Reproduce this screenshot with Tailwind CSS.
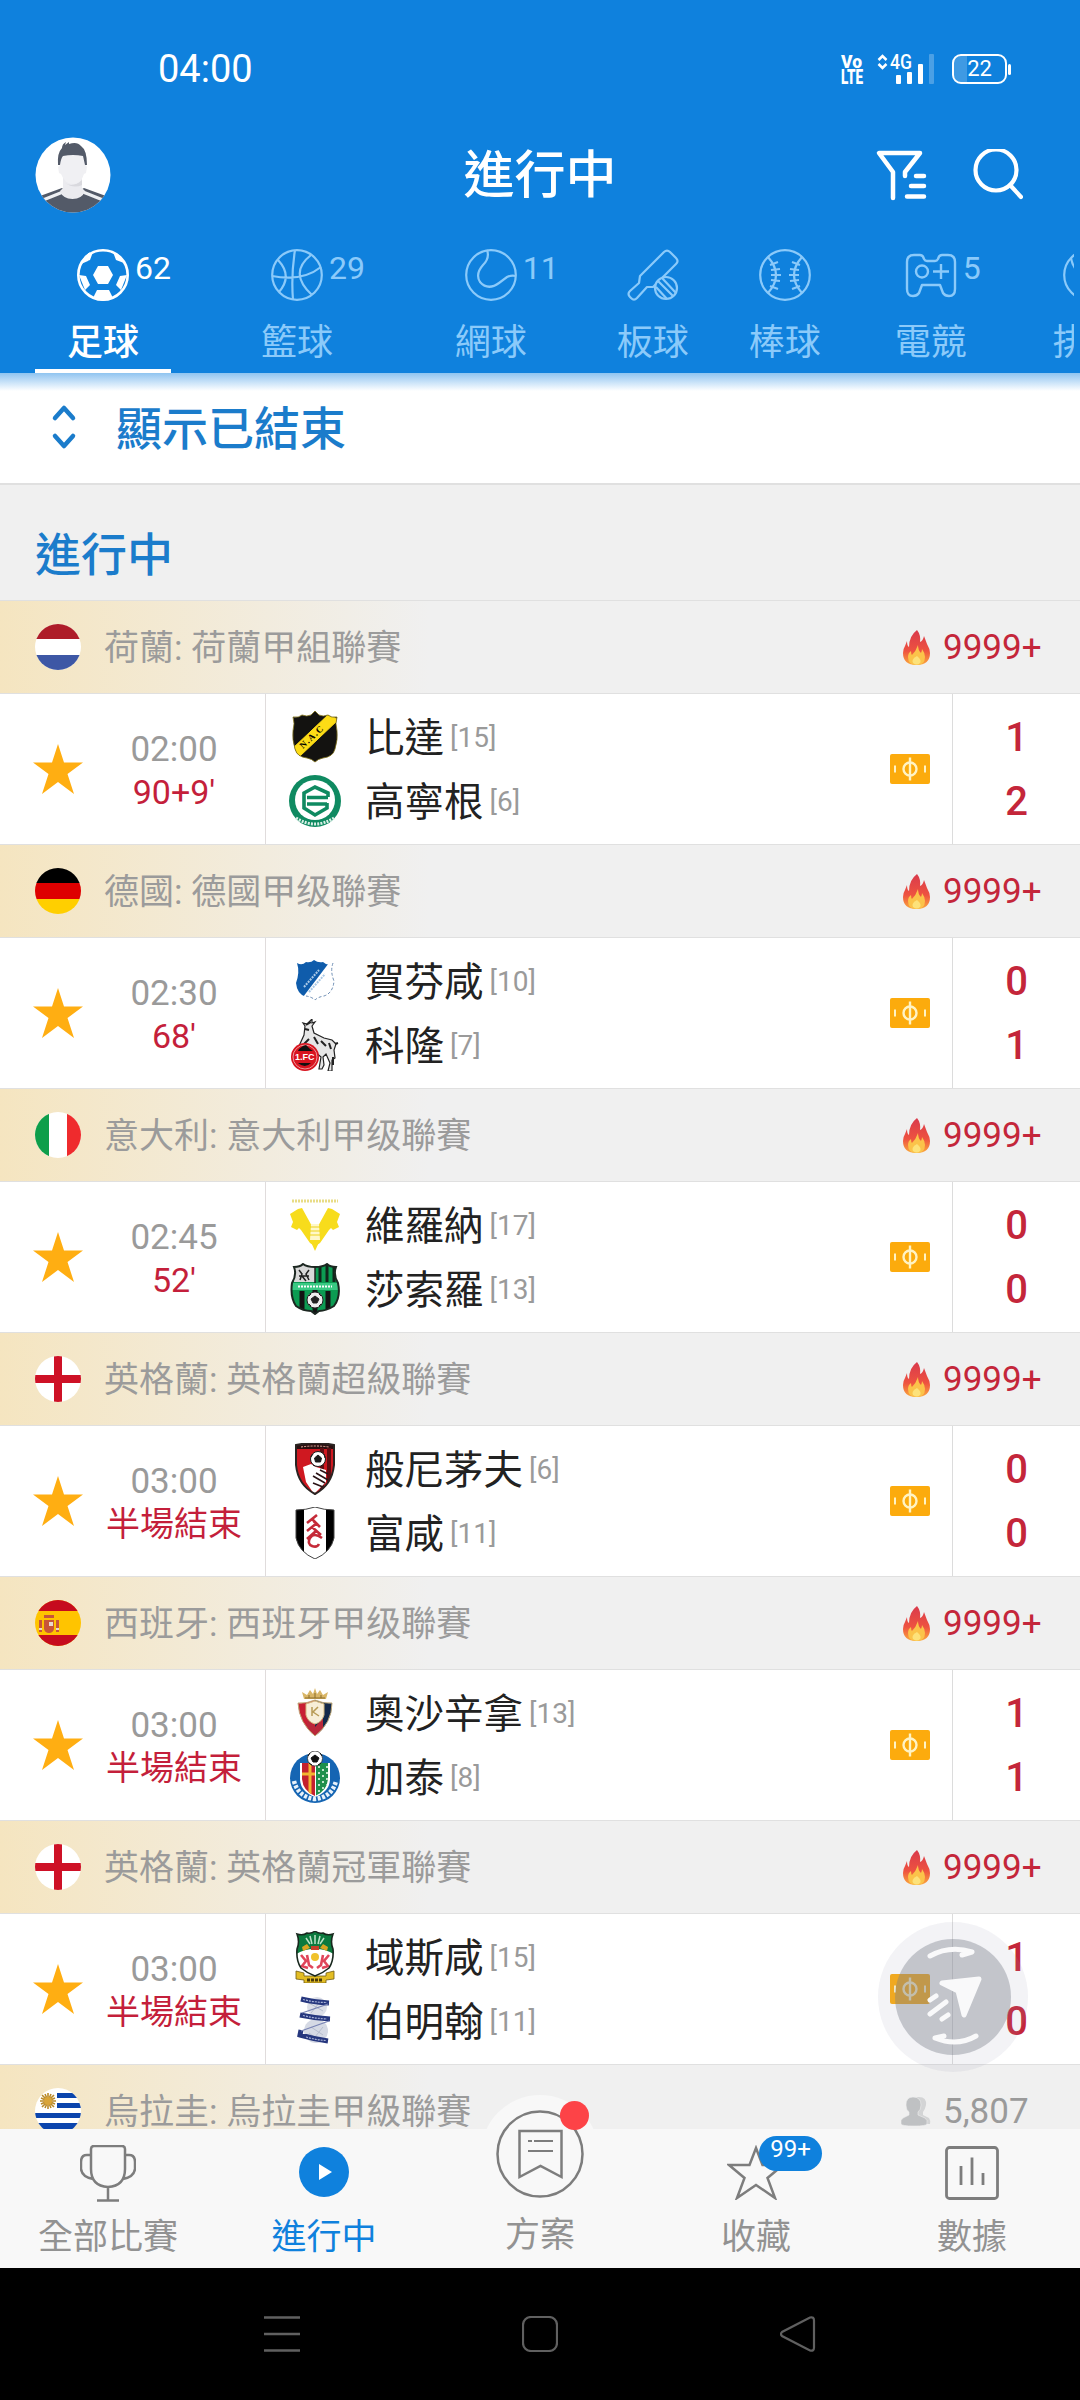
<!doctype html>
<html lang="zh-Hant">

<head>
  <meta charset="UTF-8">
  <meta content="width=device-width, initial-scale=1.0" name="viewport">
  <script src="https://cdn.jsdelivr.net/npm/@tailwindcss/browser@4"></script>
  <title>進行中</title>
</head>

<body class="bg-black">
  <!--  SPRITES  START -->
  <svg class="absolute size-0" xmlns="http://www.w3.org/2000/svg">
    <clipPath id="round"><circle cx="23" cy="23" r="23"/></clipPath>
    <clipPath id="nacShield"><path d="M4 6q6 1 9-2 5 2 9 0l4-4 4 4q4 2 9 0 3 3 9 2-2 6 0 14 1 8-2 18-2 8-12 9-5 1-8 4-3-3-8-4-10-1-12-9-3-10-2-18 2-8 0-14z"/></clipPath>
    <clipPath id="hofShield"><path d="M8 8q5 3 9-1 5 1 8-2 4 3 9 2 4 4 10 2-3 8 1 18-1 12-10 15-6 1-9 4-3-3-9-4-9-3-10-14 4-11 1-20z"/></clipPath>
    <clipPath id="sasShield"><path d="M5 4q6 0 9-3 4 3 12 3 8 0 12-3 3 3 9 3-3 8 2 16 3 14-4 23-8 5-15 5l-4 3-4-3q-8 0-15-5-6-9-4-23 5-8 2-16z"/></clipPath>
    <clipPath id="bouShield"><path d="M7 2q19-4 38 0v20q-2 20-19 29-17-9-19-29z"/></clipPath>
    <clipPath id="fulShield"><path d="M7 3q10 0 19-3 9 3 19 3v28q-3 14-19 21-16-7-19-21z"/></clipPath>
    <clipPath id="osaShield"><path d="M9 16q8 1 17-3 9 4 17 3 0 20-17 33-16-13-17-33z"/></clipPath>
    <clipPath id="getInner"><path d="M13 12h26v16q-1 12-13 17-12-5-13-17z"/></clipPath>
    <clipPath id="wreShield"><path d="M8 3q6 2 10-1 5 1 8-2 3 3 8 2 4 3 10 1-3 8 0 15 1 12-4 19-6 5-14 8-8-3-14-8-5-7-4-19 3-7 0-15z"/></clipPath>
    <linearGradient id="flameFill" x1="0" x2="0" y1="0" y2="1">
      <stop offset="0" stop-color="#d93a4c"/><stop offset=".6" stop-color="#ee5240"/><stop offset="1" stop-color="#fba93c"/>
    </linearGradient>

    <!-- flags -->
    <symbol id="nl" viewBox="0 0 46 46"><g clip-path="url(#round)"><path fill="#fff" d="M0 0h46v46H0z"/><path fill="#ae1c28" d="M0 0h46v15H0z"/><path fill="#3d57a5" d="M0 31h46v15H0z"/></g></symbol>
    <symbol id="de" viewBox="0 0 46 46"><g clip-path="url(#round)"><path d="M0 0h46v15H0z"/><path fill="#de0000" d="M0 15h46v16H0z"/><path fill="#ffcf00" d="M0 31h46v15H0z"/></g></symbol>
    <symbol id="it" viewBox="0 0 46 46"><g clip-path="url(#round)"><path fill="#fff" d="M0 0h46v46H0z"/><path fill="#0e9e4a" d="M0 0h14v46H0z"/><path fill="#ef2b2d" d="M32 0h14v46H32z"/></g></symbol>
    <symbol id="en" viewBox="0 0 46 46"><g clip-path="url(#round)"><path fill="#fff" d="M0 0h46v46H0z"/><path fill="#ce1126" d="M19 0h8v46h-8zM0 19h46v8H0z"/></g></symbol>
    <symbol id="es" viewBox="0 0 46 46"><g clip-path="url(#round)"><path fill="#ffc400" d="M0 0h46v46H0z"/><path fill="#c60b1e" d="M0 0h46v11H0zM0 35h46v11H0z"/><path fill="#c8553a" d="M9 20h10v9q-1 4-5 4t-5-4zM4 20h3v12H4zM21 20h3v12h-3zM9 15h10v3H9z"/><path fill="#e9d9cf" d="M14 22h4v4h-4zM4 28h3v2H4zM21 28h3v2h-3z"/></g></symbol>
    <symbol id="uy" viewBox="0 0 46 46"><g clip-path="url(#round)"><path fill="#fff" d="M0 0h46v46H0z"/><path fill="#0b45ad" d="M22 5h24v5H22zM22 15h24v5H22zM0 25h46v5H0zM0 35h46v6H0z"/><path stroke="#b98a2a" stroke-width="1.6" d="M13 5v16M5 13h16M7 7l12 12M19 7L7 19M10 6l6 14M16 6l-6 14M6 10l14 6M6 16l14-6"/><circle cx="13" cy="13" r="4" fill="#d9a53a"/></g></symbol>

    <!-- club logos -->
    <symbol id="nac" viewBox="0 0 52 52"><g clip-path="url(#nacShield)"><path fill="#131210" d="M0 0h52v52H0z"/><path fill="#fddc16" stroke="#fddc16" d="M3 38L40 3l9 6L11 45z"/></g><path d="M4 6q6 1 9-2 5 2 9 0l4-4 4 4q4 2 9 0 3 3 9 2-2 6 0 14 1 8-2 18-2 8-12 9-5 1-8 4-3-3-8-4-10-1-12-9-3-10-2-18 2-8 0-14z" fill="none" stroke="#7c6d14" stroke-width=".8"/><text transform="translate(14 38) rotate(-43)" font-family="Liberation Serif" font-weight="700" font-size="9" letter-spacing="1.1">N.A.C</text></symbol>
    <symbol id="gro" viewBox="0 0 52 52"><circle cx="26" cy="26" r="26" fill="#0f8a61"/><circle cx="26" cy="25" r="20" fill="#fff"/><path d="M7 43q19 12 38 0" fill="none" stroke="#d9efe6" stroke-width="3" stroke-dasharray="2 1.2"/><path fill="none" stroke="#0f8a61" stroke-width="3.6" d="M39 22v-4l-13-6-11 6v15l11 7 12-7v-5M18 22.500h21M18 29h20"/></symbol>
    <symbol id="hof" viewBox="0 0 52 52"><g clip-path="url(#hofShield)"><path fill="#fff" d="M0 0h52v52H0z"/><path fill="#0f5cab" d="M0 0h46L11 46H0z"/><path stroke="#a9c8e6" stroke-width="2" stroke-dasharray="2 1" d="M15 32l15-17M20 37l16-18"/></g><path d="M44 8q-3 8 1 18-1 12-10 15-6 1-9 4-3-3-9-4" fill="none" stroke="#6f8fb5" stroke-dasharray="3 2"/></symbol>
    <symbol id="koe" viewBox="0 0 52 52"><path d="M15 16l1-9-2-3 4 1 5-5v4l3-1-3 4 2 7 10 5 8 2 4 4-2 6 1 8-3 2v11h-4l2-8-4-9-3 3 1 8-2 4h-3l2-12-7-6-12 2-3-7z" fill="#e6e6e6" stroke="#222" stroke-width="1.2"/><path d="M17 6l5-3M16 10l4 1M20 20l-5 5M25 18l4 7M32 22l5 5M40 24l2 6M44 38v8M46 25l3-1" stroke="#222" stroke-width="2"/><circle cx="16" cy="38" r="14" fill="#d8141f"/><circle cx="16" cy="38" r="12" fill="none" stroke="#f3b6b6" stroke-width=".8"/><path d="M10 30l4-3 3-1 4 4 3 2H9zM9 44q7 6 13 0z" fill="#111"/><text x="6" y="41" font-family="Liberation Sans" font-weight="700" font-size="9" fill="#fff">1.FC</text></symbol>
    <symbol id="ver" viewBox="0 0 52 52"><path stroke="#e8dc86" stroke-width="3" stroke-dasharray="2 1" d="M3 2h46"/><path fill="#f7dc1c" d="M1 15l8-5 4-1 11 20v17l-3-2L12 31l-2-2-2 2-6-3 2-5zM51 15l-8-5-4-1-11 20v17l3-2 9-13 2-2 2 2 6-3-2-5z"/><path fill="#fff8c8" d="M22 25h8l1 16h-10z"/><path stroke="#ecd21c" d="M21 28h10M21 32h10M21 36h10"/><path fill="#f7dc1c" d="M21 41h10l-5 11z"/></symbol>
    <symbol id="sas" viewBox="0 0 52 52"><g clip-path="url(#sasShield)"><path fill="#0c9b52" d="M0 0h52v52H0z"/><path fill="#d9d9d9" d="M5 0h21v19H5z"/><path stroke="#222" stroke-width="1.5" fill="none" d="M10 7l3 4-2 6M20 7l-3 4 3 6M13 13l4 5M10 13h10"/><path stroke="#10261b" stroke-width="3" d="M31 2v17M38 2v17M45 2v17"/><path stroke="#131313" stroke-width="5" d="M13 28v20M39 28v20M26 27v23"/><path fill="#39c983" d="M2 20h48v7H2z"/></g><path d="M5 4q6 0 9-3 4 3 12 3 8 0 12-3 3 3 9 3-3 8 2 16 3 14-4 23-8 5-15 5l-4 3-4-3q-8 0-15-5-6-9-4-23 5-8 2-16z" fill="none" stroke="#1c2721" stroke-width="2"/><path d="M26 4v16" stroke="#222" stroke-width="1.5"/><path stroke="#fff" stroke-width="2" stroke-dasharray="2 1" d="M9 23.500h34"/><circle cx="26" cy="37" r="8" fill="#eee" stroke="#222"/><path d="M26 33l4 3-2 4h-4l-2-4zM20 33l2-2M30 31l2 2M20 41l2 2M30 43l2-2" fill="#222" stroke="#222"/></symbol>
    <symbol id="bou" viewBox="0 0 52 52"><g clip-path="url(#bouShield)"><path fill="#cf1820" d="M0 0h52v52H0z"/><path fill="#2a0f10" d="M7 0h38v6H7z"/><path stroke="#5e0d12" stroke-width="4" d="M33 5v45M40 5v45"/><path fill="#fff" d="M14 24l8-3 5 3 10 3v12L25 51l-8-12z"/><path stroke="#2b1416" stroke-width="1.6" d="M24 33l12 7M27 30l12 7M31 27l8 4M24 40l10 4"/></g><path d="M7 2q19-4 38 0v20q-2 20-19 29-17-9-19-29z" fill="none" stroke="#2a2422" stroke-width="2"/><path stroke="#e8b0a0" stroke-dasharray="2 1.200" d="M12 4q14-2 28 0" fill="none"/><circle cx="29" cy="16" r="7.500" fill="#fff" stroke="#1b1b1b"/><path d="M29 12l3.500 3-1 4h-5l-1-4zM22 14l2-3M35 11l1 4M24 22l2 1" stroke="#1b1b1b" fill="#1b1b1b"/></symbol>
    <symbol id="ful" viewBox="0 0 52 52"><g clip-path="url(#fulShield)"><path fill="#fff" d="M0 0h52v52H0z"/><path d="M0 0h15v52H0zM37 0h15v52H37z"/></g><path d="M7 3q10 0 19-3 9 3 19 3v28q-3 14-19 21-16-7-19-21z" fill="none" stroke="#444"/><path d="M18 16l10-8M23 12l8 8M18 24l10-8M23 20l9 8M24 15l2-1M18 32l9-8M33 31q-8-6-12 0-3 6 2 8 5 2 7-2" fill="none" stroke="#c52a38" stroke-width="2.600"/></symbol>
    <symbol id="osa" viewBox="0 0 52 52"><path fill="#d9b667" d="M15 12L13 5l5 3 3-5 3 4 2-6 2 6 3-4 3 5 5-3-2 7z"/><path d="M16 11h20M20 8v3M26 6v5M32 8v3" stroke="#8b6d2b"/><g clip-path="url(#osaShield)"><path fill="#c81f33" d="M0 0h26v52H0z"/><path fill="#13294b" d="M26 0h26v52H26z"/><path fill="#b9283a" d="M26 40l-8-9v21h16V31z"/></g><path d="M9 16q8 1 17-3 9 4 17 3 0 20-17 33-16-13-17-33z" fill="none" stroke="#bfa878"/><path fill="#f7eed8" stroke="#d5b980" d="M17 17l9-3 9 3v11q-2 7-9 9-7-2-9-9z"/><path d="M23 20v9M29 20l-5 5 6 4" stroke="#b79a55" fill="none" stroke-width="1.500"/></symbol>
    <symbol id="get" viewBox="0 0 52 52"><circle cx="26" cy="27" r="25" fill="#1565b3"/><path d="M5 30q4 16 21 18 17-2 21-18" fill="none" stroke="#e8f1fa" stroke-width="4.500" stroke-dasharray="3 1.600"/><path fill="#fff" d="M11 12h30v17q-1 12-15 17-14-5-15-17z"/><g clip-path="url(#getInner)"><path fill="#c4202f" d="M13 10h13v40H13z"/><path fill="#1d8f4c" d="M27 10h13v40H27z"/><path stroke="#f2b530" stroke-width="3" d="M21 10v36M12 23h14"/><path stroke="#bfe3cb" stroke-width="2" stroke-dasharray="2 4" d="M30 15v30M34 18v30M38 15v30"/></g><circle cx="26" cy="7.500" r="7.500" fill="#fff" stroke="#333" stroke-width=".8"/><path d="M26 4l4 3-2 4h-4l-2-4zM19 5l2-3M31 2l2 3M20 12l3 2M29 14l3-2" fill="#111" stroke="#111"/></symbol>
    <symbol id="wre" viewBox="0 0 52 52"><path fill="#e3bd24" stroke="#6e5a12" stroke-width=".8" d="M7 40l8 2v3h22v-3l8-2v8l-8 1v3H15v-3l-8-1z"/><path d="M18 49h16" stroke="#4a3b0a" stroke-width="3" stroke-dasharray="3 1"/><g clip-path="url(#wreShield)"><path fill="#fff" d="M0 0h52v52H0z"/><path fill="#0c7a3e" d="M6 0h40v24q-8-6-20-6T6 24z"/><path stroke="#bde3c8" stroke-width="1.500" d="M26 4v9M21 5l2 8M31 5l-2 8M17 7l4 6M35 7l-4 6"/><path fill="#d9a520" d="M13 16l5-3 3 4-7 3zM39 16l-5-3-3 4 7 3z"/><path fill="#c8402a" d="M22 15h8v4h-8z"/><path stroke="#e0455a" stroke-width="2.600" fill="none" d="M12 24l5 6-4 5 6 2M18 24l2 10 4 3M40 24l-5 6 4 5-6 2M34 24l-2 10-4 3"/><circle cx="26" cy="26" r="4" fill="#f0c22c"/></g><path d="M8 3q6 2 10-1 5 1 8-2 3 3 8 2 4 3 10 1-3 8 0 15 1 12-4 19-6 5-14 8-8-3-14-8-5-7-4-19 3-7 0-15z" fill="none" stroke="#18271d" stroke-width="1.600"/></symbol>
    <symbol id="bir" viewBox="0 0 52 52"><circle cx="28" cy="12" r="10" fill="#dcdfe8"/><circle cx="27" cy="36" r="12" fill="#d5d9e4"/><path fill="none" stroke="#b5bccd" d="M20 8l14 8M22 32l12 8M20 38l8 6M30 8l-8 10M34 32l-8 10"/><path fill="none" stroke="#26377e" stroke-width="5" d="M12 4q12 3 28 4M11 20q14 3 30 4M12 35l-1 5q14 4 28 6"/><path fill="none" stroke="#7883b4" stroke-width="1.200" d="M39 9L13 18M40 26L12 36"/><path fill="none" stroke="#a9b3d8" stroke-width="1.200" stroke-dasharray="2 1" d="M14 4.500q12 3 24 3M14 20.500q12 3 24 3.500M17 42q10 3 20 3.500"/></symbol>

    <!-- small icons -->
    <symbol id="flame" viewBox="0 0 27 35"><path fill="url(#flameFill)" d="M14 0q4 5 3 12 3-1 4-6l3 8q3 5 3 9 0 12-13.500 12T0 23q0-4 2-7l2-5q0 5 2 6 0-11 8-17z"/><path fill="#fbc34a" d="M15 15q0 5 3 8 1-2 1-4 3 4 3 8 0 8-8.500 8T5 27q0-4 3-6 0 3 1 4 4-4 6-10z"/><path fill="#fde27a" d="M14 26q5 4 3 7-3 3-7 0-2-4 4-7z"/></symbol>
    <symbol id="people" viewBox="0 0 30 30"><path fill="#d3d4d5" d="M16 1q10-1 9 8-1 5-3 7v3l6 3q2 3 1 6H14z"/><path fill="#bfc1c3" stroke="#efefef" stroke-width=".6" d="M12 1q8 0 8 8 0 5-3 7v3l7 3q3 2 2 6-1 2-13 2T0 28q-1-4 2-6l6-3v-3q-3-2-3-7 0-8 7-8z"/></symbol>
    <symbol id="star" viewBox="0 0 50 50"><path fill="#ffae12" d="M25 0l6 18.500h19L34.500 30l6.500 20-16-12-16 12 6.500-20L0 18.500h19z"/></symbol>
    <symbol id="pitch" viewBox="0 0 40 30"><rect width="40" height="30" rx="2" fill="#fcab0d"/><g fill="none" stroke="#fff3c4"><circle cx="20" cy="15" r="6.500" stroke-width="2.400"/><path stroke-width="2.400" d="M20 3.500v23"/><path stroke-width="2" d="M5 11.500v7M35 11.500v7"/></g></symbol>
  </svg>
  <!--  SPRITES  END -->

  <div class="relative flex h-[2400px] w-[1080px] flex-col overflow-hidden bg-black font-['Roboto','Noto_Sans_CJK_TC',sans-serif]">

    <header class="h-[373px] shrink-0 bg-[#0f81dd] text-white">
      <!-- status bar -->
      <div class="flex h-[135px] items-center justify-between pt-[3px] pr-[69px] pl-[158px]">
        <span class="text-[38px] leading-none">04:00</span>
        <div class="flex h-[30px] items-center">
          <svg class="h-[30px] w-[22px] overflow-visible" viewBox="0 0 22 30" fill="#fff" font-family="Roboto" font-weight="900">
            <text x="0" y="14" font-size="18" textLength="21" lengthAdjust="spacingAndGlyphs">Vo</text>
            <text x="0" y="30" font-size="20" textLength="22" lengthAdjust="spacingAndGlyphs">LTE</text>
          </svg>
          <svg class="ml-[15px] h-[30px] w-[58px] overflow-visible" viewBox="0 0 58 30" fill="#fff" font-family="Roboto">
            <path fill="none" stroke="#fff" stroke-width="2.500" d="M.5 6l4-4 4 4M.5 10l4 4 4-4"/>
            <text x="12" y="15" font-size="21" font-weight="500" textLength="22" lengthAdjust="spacingAndGlyphs">4G</text>
            <rect x="18" y="21" width="5" height="9" rx="1"/><rect x="29" y="18" width="5" height="12" rx="1"/><rect x="40" y="10" width="5" height="20" rx="1"/>
            <rect x="51" y="0" width="5" height="30" rx="1" opacity=".25"/>
          </svg>
          <div class="relative ml-[16px] flex h-[30px] w-[55px] items-center justify-center rounded-[9px] border-[2.5px] border-white text-[22px] leading-none">
            <i class="absolute top-0 left-0 h-full w-[13px] rounded-l-[6px] bg-white/20"></i>
            22
          </div>
          <i class="ml-[1px] h-[11px] w-[3px] rounded-sm bg-white"></i>
        </div>
      </div>

      <!-- title bar -->
      <div class="grid h-[76px] grid-cols-3 items-center px-[35px]">
        <svg class="size-[76px]" viewBox="0 0 76 76">
          <clipPath id="face"><circle cx="38" cy="38" r="37.500"/></clipPath>
          <g clip-path="url(#face)">
            <path fill="#fff" d="M0 0h76v76H0z"/>
            <path fill="#535a68" d="M5 59l22-8 11 6 11-6 22 8v18H5z"/>
            <path stroke="#eef0f3" stroke-width="3" d="M8 63l20-8M68 63l-20-8"/>
            <path fill="#ebebef" d="M28 40h19v11l3 3q-3 8-12.500 8T25 54l3-3z"/>
            <path fill="#d9d9de" d="M30 46q8 5 17-3v5q-8 4-17-2z"/>
            <path fill="#f0f0f3" d="M25 16h26v12l1 2-1 6-2 1q-3 10-11 10t-12-10l-2-1-1-6 2-2z"/>
            <path fill="#535a68" d="M23 28q-1-12 4-17 0-4 4-6l-1 3 4-3v2q8-3 12 2 6 4 6 19l-2 0-2-9q-10-2-20 0-2 2-3 9z"/>
          </g>
        </svg>
        <h1 class="pt-[3px] text-center text-[51px] leading-[76px] font-medium">進行中</h1>
        <div class="flex items-center justify-end gap-[41px] pr-[22px]">
          <svg class="h-[52px] w-[56px]" viewBox="0 0 56 52" fill="none" stroke="#fff" stroke-width="4.500" stroke-linecap="round" stroke-linejoin="round">
            <path d="M19 49V23L5 4h41L31 23v4M42 27h8M37 37h13M33 47.500h17"/>
          </svg>
          <svg class="size-[52px]" viewBox="0 0 52 52" fill="none" stroke="#fff" stroke-width="4.200" stroke-linecap="round">
            <circle cx="25" cy="21" r="20.500"/><path d="M39 36l11 12"/>
          </svg>
        </div>
      </div>

      <!-- sport tabs -->
      <nav class="mr-[6px] flex h-[164px] items-start gap-[58px] overflow-hidden pt-[38px] pl-[35px] text-[#8bcafa]">
        <div class="flex h-[126px] shrink-0 flex-col items-center border-b-[6px] border-white text-white">
          <div class="grid grid-cols-[1fr_52px_1fr]">
            <i></i>
            <svg class="size-[52px]" viewBox="0 0 52 52" fill="#fff">
              <circle cx="26" cy="26" r="24.700" fill="none" stroke="#fff" stroke-width="2.600"/>
              <path d="M21 17h10l5 9-5 9H21l-5-9zM16 3l-3 8-8 3 6-9zM36 3l3 8 8 3-6-9zM13 3l-2 9-7 3 4-8zM2 26l7 1 4 9-5 5zM50 26l-7 1-4 9 5 5zM20 41h12l4 8-10 3-10-3z"/>
            </svg>
            <span class="pt-[1px] pl-1.5 text-[32px] leading-9">62</span>
          </div>
          <span class="mt-[22px] text-[36px] leading-10 font-medium">足球</span>
        </div>
        <div class="flex shrink-0 flex-col items-center">
          <div class="grid grid-cols-[1fr_52px_1fr]">
            <i></i>
            <svg class="size-[52px]" viewBox="0 0 52 52" fill="none" stroke="currentColor" stroke-width="2.200">
              <circle cx="26" cy="26" r="24.800"/>
              <path d="M24 1q-4 25-2 50M1 27q30 6 49-9M7 11q15 16 1 32M40 6Q17 24 41 46"/>
            </svg>
            <span class="pt-[1px] pl-1.5 text-[32px] leading-9">29</span>
          </div>
          <span class="mt-[22px] text-[36px] leading-10">籃球</span>
        </div>
        <div class="flex shrink-0 flex-col items-center">
          <div class="grid grid-cols-[1fr_52px_1fr]">
            <i></i>
            <svg class="size-[52px]" viewBox="0 0 52 52" fill="none" stroke="currentColor" stroke-width="2.200">
              <circle cx="26" cy="26" r="24.800"/>
              <path d="M22 1q3 8-4 15-8 9-3 17 8 9 19 1l8-6q4-2 9-1"/>
            </svg>
            <span class="pt-[1px] pl-1.5 text-[32px] leading-9">11</span>
          </div>
          <span class="mt-[22px] text-[36px] leading-10">網球</span>
        </div>
        <div class="flex shrink-0 flex-col items-center">
          <svg class="size-[52px]" viewBox="0 0 52 52" fill="none" stroke="currentColor" stroke-width="2.200" stroke-linejoin="round">
            <path d="M37 3q3-3 6 0l6 6q3 3 0 6L26 38l-6 0-10 11q-3 3-6 0l-1-1q-3-3 0-6l9-8 1-7z"/>
            <circle cx="39" cy="39" r="11" fill="#0f81dd"/><path d="M31 32l15 15M35 29l14 15M29 38l11 12"/>
          </svg>
          <span class="mt-[22px] text-[36px] leading-10">板球</span>
        </div>
        <div class="ml-[2px] flex shrink-0 flex-col items-center">
          <svg class="size-[52px]" viewBox="0 0 52 52" fill="none" stroke="currentColor" stroke-width="2.200">
            <circle cx="26" cy="26" r="24.800"/>
            <path d="M9 8q16 18 0 36M43 8q-16 18 0 36M11 16l8-3M12 21l9-1M12 26h10M12 31l9 1M11 37l8 3M41 16l-8-3M40 21l-9-1M40 26H30M40 31l-9 1M41 37l-8 3"/>
          </svg>
          <span class="mt-[22px] text-[36px] leading-10">棒球</span>
        </div>
        <div class="ml-[2px] flex shrink-0 flex-col items-center">
          <div class="grid grid-cols-[1fr_52px_1fr]">
            <i></i>
            <svg class="size-[52px]" viewBox="0 0 52 52" fill="none" stroke="currentColor" stroke-width="2.400" stroke-linejoin="round">
              <path d="M9 6h6q3 0 4 4 1 2 3 2h8q2 0 3-2 1-4 4-4h6q7 0 7 7v27q0 7-6 7-4 0-6-3l-3-8H17l-3 8q-2 3-6 3-6 0-6-7V13q0-7 7-7z"/>
              <circle cx="17" cy="22.500" r="6"/><path d="M36 15v15M28 22.500h16"/>
            </svg>
            <span class="pt-[1px] pl-1.5 text-[32px] leading-9">5</span>
          </div>
          <span class="mt-[22px] text-[36px] leading-10">電競</span>
        </div>
        <div class="flex shrink-0 flex-col items-center pl-[14px]">
          <svg class="size-[52px]" viewBox="0 0 52 52" fill="none" stroke="currentColor" stroke-width="2.200">
            <circle cx="26" cy="26" r="24.800"/><path d="M8 9q2 12 14 20M26 1q-12 14-4 28"/>
          </svg>
          <span class="mt-[22px] text-[36px] leading-10">排球</span>
        </div>
      </nav>
    </header>

    <main class="h-[1756px] shrink-0 overflow-hidden bg-[#f0f0f0]">
      <div class="h-[112px] border-b-2 border-[#e0e0e0] bg-linear-to-b from-[#8fc4f0] to-white to-[18px] pt-[2px]">
        <div class="flex h-[104px] items-center pl-[50px] text-[#1b7ccb]">
          <svg class="h-[46px] w-[28px]" viewBox="0 0 28 46" fill="none" stroke="currentColor" stroke-width="4.500" stroke-linecap="round" stroke-linejoin="round">
            <path d="M5 14l9-10 9 10M5 32l9 10 9-10"/>
          </svg>
          <span class="ml-[38px] pt-[3px] text-[46px] leading-none font-medium">顯示已結束</span>
        </div>
      </div>
      <h2 class="h-[115px] pt-[36px] pl-[35px] text-[46px] leading-[68px] font-medium text-[#1b7ccb]">進行中</h2>
      <div id="render">
        <!-- league blocks -->
      </div>
    </main>

    <!-- bottom navigation -->
    <nav class="relative grid h-[139px] shrink-0 grid-cols-5 bg-[#f8f8f8] text-center text-[35px] leading-10 text-[#929292]">
      <div class="flex flex-col items-center pt-[16px]">
        <svg class="h-[57px] w-[56px]" viewBox="0 0 56 57" fill="none" stroke="#7d7d7d" stroke-width="2.500">
          <path d="M11 4q0-3 3-3h28q3 0 3 3v20q0 17-17 18Q11 41 11 24zM11 10H7q-6 0-6 7v7q1 8 12 10M45 10h4q6 0 6 7v7q-1 8-12 10M28 42v13M17 55.500h22"/>
        </svg>
        <span class="mt-[16px]">全部比賽</span>
      </div>
      <div class="flex flex-col items-center pt-[18px] text-[#0f81dd]">
        <svg class="size-[50px]" viewBox="0 0 50 50"><circle cx="25" cy="25" r="25" fill="#0f81dd"/><path fill="#fff" d="M20 17l13 8-13 8z"/></svg>
        <span class="mt-[21px]">進行中</span>
      </div>
      <div class="flex flex-col items-center">
        <svg class="-mt-[34px] h-[117px] w-[118px]" viewBox="0 0 118 117">
          <circle cx="59" cy="59" r="59" fill="#f8f8f8"/>
          <g fill="none" stroke="#7d7d7d" stroke-width="2.500">
            <circle cx="59" cy="59" r="42.500"/>
            <path d="M38.500 36h42v46L59.500 71 38.500 82z"/><path stroke-width="2" d="M47 46h4M53 46h19M47 56h25"/>
          </g>
          <circle cx="93.500" cy="20.500" r="14.500" fill="#fd4347"/>
        </svg>
        <span class="mt-[4px]">方案</span>
      </div>
      <div class="flex flex-col items-center pt-[16px]">
        <div class="relative">
          <svg class="h-[55px] w-[58px]" viewBox="0 0 58 55" fill="none" stroke="#7d7d7d" stroke-width="2.500"><path d="M29 3l6.500 17H56L40.500 33 48 53 29 40 10 53l7.500-20L2 20h20.500z"/></svg>
          <span class="absolute -top-[9px] left-[32px] h-[35px] w-[63px] rounded-full bg-[#0f81dd] text-[24px] leading-[27px] text-white">99+</span>
        </div>
        <span class="mt-[18px]">收藏</span>
      </div>
      <div class="flex flex-col items-center pt-[17px]">
        <svg class="size-[54px]" viewBox="0 0 54 54" fill="none" stroke="#7d7d7d" stroke-width="2.800"><rect x="1.500" y="1.500" width="51" height="51" rx="3"/><path d="M16 20v19M27 11.500V39M38 27v12"/></svg>
        <span class="mt-[18px]">數據</span>
      </div>
    </nav>

    <!-- android keys -->
    <div class="flex h-[132px] shrink-0 items-center justify-between px-[264px] text-[#606060]">
      <svg class="size-[36px]" viewBox="0 0 36 36" stroke="currentColor" stroke-width="2.500"><path d="M0 1.500h36M0 18h36M0 34.500h36"/></svg>
      <svg class="size-[36px]" viewBox="0 0 36 36" fill="none" stroke="currentColor" stroke-width="2.200"><rect x="1" y="1" width="34" height="34" rx="8"/></svg>
      <svg class="size-[36px]" viewBox="0 0 36 36" fill="none" stroke="currentColor" stroke-width="2.200"><path d="M30 1.500q4-1 4 3v27q0 4-4 3L2 20q-2-2 0-4z"/></svg>
    </div>

    <!-- floating button -->
    <svg class="absolute top-[1922px] left-[878px] size-[150px]" viewBox="0 0 150 150">
      <circle cx="75" cy="75" r="75" fill="#a0a0b4" opacity=".12"/>
      <circle cx="75" cy="75" r="58" fill="#7b7f8b" opacity=".4"/>
      <g fill="none" stroke="#f9f9fa" stroke-width="5" stroke-linecap="round" stroke-linejoin="round">
        <path d="M52 34q20-11 42-4l-10 3M57 116q22 9 41-2M57 116l9-2M52 78l6-4M52 92l16-12M64 97l6-4"/>
        <path fill="#f9f9fa" d="M64 61l37-4-15 36-6-24z"/>
      </g>
    </svg>
  </div>

  <script>
    const leagues = [
      { flag: "nl", name: "荷蘭: 荷蘭甲組聯賽", time: "02:00", status: "90+9'", home: ["nac", "比達", 15, 1], away: ["gro", "高寧根", 6, 2] },
      { flag: "de", name: "德國: 德國甲级聯賽", time: "02:30", status: "68'", home: ["hof", "賀芬咸", 10, 0], away: ["koe", "科隆", 7, 1] },
      { flag: "it", name: "意大利: 意大利甲级聯賽", time: "02:45", status: "52'", home: ["ver", "維羅納", 17, 0], away: ["sas", "莎索羅", 13, 0] },
      { flag: "en", name: "英格蘭: 英格蘭超級聯賽", time: "03:00", status: "半場結束", home: ["bou", "般尼茅夫", 6, 0], away: ["ful", "富咸", 11, 0] },
      { flag: "es", name: "西班牙: 西班牙甲级聯賽", time: "03:00", status: "半場結束", home: ["osa", "奧沙辛拿", 13, 1], away: ["get", "加泰", 8, 1] },
      { flag: "en", name: "英格蘭: 英格蘭冠軍聯賽", time: "03:00", status: "半場結束", home: ["wre", "域斯咸", 15, 1], away: ["bir", "伯明翰", 11, 0] },
      { flag: "uy", name: "烏拉圭: 烏拉圭甲級聯賽", viewers: "5,807" },
    ];

    const renderTeam = ([logo, name, rank]) => `
      <div class="flex h-16 items-center">
        <svg class="size-[52px]"><use href="#${logo}"/></svg>
        <span class="ml-[24px] pt-[3px] text-[39.5px] leading-none text-[#222]">${name}</span>
        <span class="ml-[6px] pt-[2px] text-[28px] leading-none text-[#9a9a9a]">[${rank}]</span>
      </div>`;

    const renderLeague = (l) => `
      <div class="flex h-[94px] items-center border-y border-[#e0e0e0] bg-linear-to-r from-[#f5e5c0] to-[#f0f0f0] to-[430px] pl-[35px]">
        <svg class="size-[46px]"><use href="#${l.flag}"/></svg>
        <span class="ml-[23px] flex-1 pt-[2px] text-[35px] leading-none text-[#9b9b9b]">${l.name}</span>
        ${l.viewers
          ? `<svg class="size-[30px]"><use href="#people"/></svg><span class="ml-[12px] w-[137px] text-[35px] leading-none text-[#9a9a9a]">${l.viewers}</span>`
          : `<svg class="h-[35px] w-[27px]"><use href="#flame"/></svg><span class="ml-[13px] w-[137px] text-[35px] leading-none text-[#c4263a]">9999+</span>`}
      </div>`;

    const renderMatch = (l) => `
      <div class="flex h-[150px] bg-white">
        <div class="flex w-[266px] items-center border-r border-[#e0dcdc] pl-[33px]">
          <svg class="size-[50px]"><use href="#star"/></svg>
          <div class="ml-[16px] flex w-[150px] flex-col items-center pt-[4px] text-[35px] leading-[43px]">
            <span class="text-[#9a9a9a]">${l.time}</span>
            <span class="text-[34px] text-[#c41f3b]">${l.status}</span>
          </div>
        </div>
        <div class="flex-1 pt-[11px] pl-[23px]">${renderTeam(l.home)}${renderTeam(l.away)}</div>
        <div class="flex w-[62px] items-center"><svg class="h-[30px] w-[40px]"><use href="#pitch"/></svg></div>
        <div class="flex w-[128px] flex-col items-center border-l border-[#dcdcdc] pt-[12px] text-[40px] leading-[64px] font-medium text-[#c4263a]">
          <span>${l.home[3]}</span>
          <span>${l.away[3]}</span>
        </div>
      </div>`;

    document.getElementById("render").innerHTML = leagues
      .map((l) => renderLeague(l) + (l.home ? renderMatch(l) : ""))
      .join("");
  </script>
</body>

</html>
